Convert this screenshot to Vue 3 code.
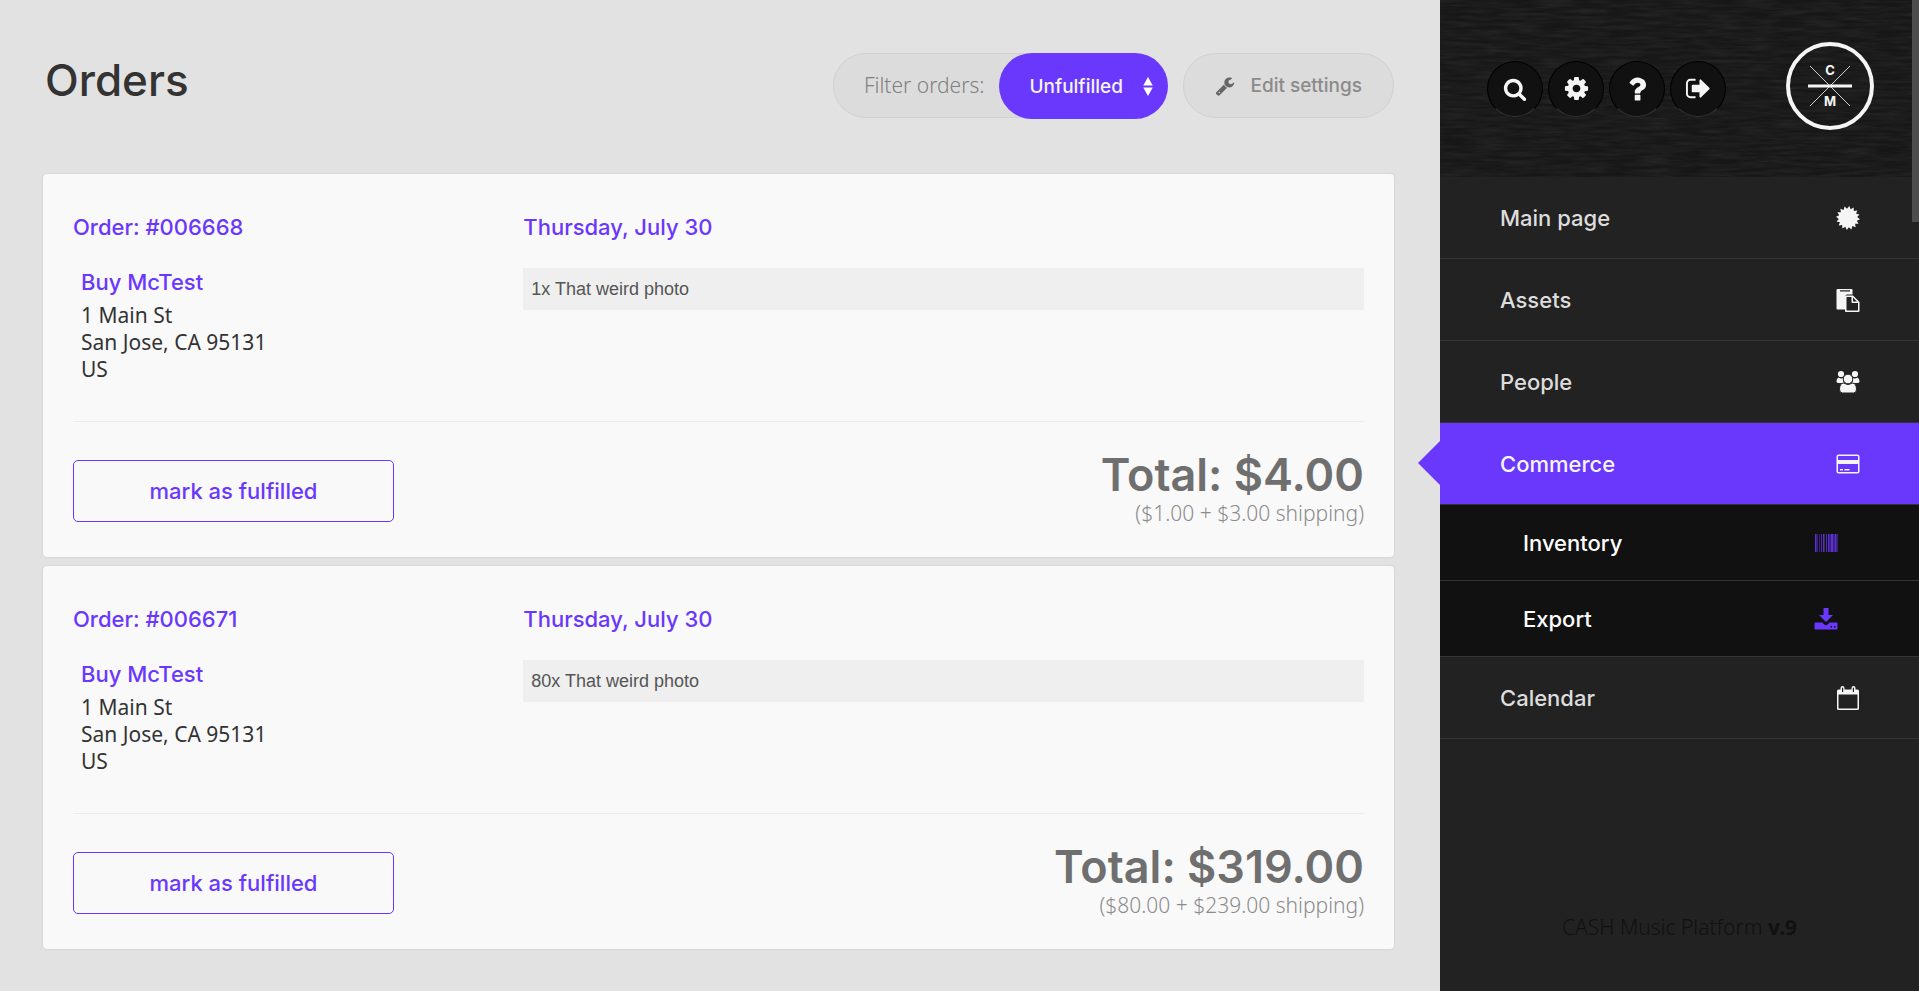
<script setup>
import { ref } from 'vue'

const filter = ref('Unfulfilled')

const orders = [
  { id: '006668', date: 'Thursday, July 30', name: 'Buy McTest', item: '1x That weird photo', total: '$4.00', detail: '($1.00 + $3.00 shipping)' },
  { id: '006671', date: 'Thursday, July 30', name: 'Buy McTest', item: '80x That weird photo', total: '$319.00', detail: '($80.00 + $239.00 shipping)' },
]

const tools = [
  { label: 'Search', size: 24, path: 'M1216 832q0-185-131.5-316.5t-316.5-131.5-316.5 131.5-131.5 316.5 131.5 316.5 316.5 131.5 316.5-131.5 131.5-316.5zm512 832q0 52-38 90t-90 38q-54 0-90-38l-343-342q-179 124-399 124-143 0-273.5-55.5t-225-150-150-225-55.5-273.5 55.5-273.5 150-225 225-150 273.5-55.5 273.5 55.5 225 150 150 225 55.5 273.5q0 220-124 399l343 343q37 37 37 90z' },
  { label: 'Settings', size: 27, path: 'M1152 896q0-106-75-181t-181-75-181 75-75 181 75 181 181 75 181-75 75-181zm512-109v222q0 12-8 23t-20 13l-185 28q-19 54-39 91 35 50 107 138 10 12 10 25t-9 23q-27 37-99 108t-94 71q-12 0-26-9l-138-108q-44 23-91 38-16 136-29 186-7 28-36 28h-222q-14 0-24.5-8.5t-11.5-21.5l-28-184q-49-16-90-37l-141 107q-10 9-25 9-14 0-25-11-126-114-165-168-7-10-7-23 0-12 8-23 15-21 51-66.5t54-70.5q-27-50-41-99l-183-27q-13-2-21-12.5t-8-23.5v-222q0-12 8-23t19-13l186-28q14-46 39-92-40-57-107-138-10-12-10-24 0-10 9-23 26-36 98.5-107.5t94.5-71.5q13 0 26 10l138 107q44-23 91-38 16-136 29-186 7-28 36-28h222q14 0 24.5 8.5t11.5 21.5l28 184q49 16 90 37l142-107q9-9 24-9 13 0 25 10 129 119 165 170 7 8 7 22 0 12-8 23-15 21-51 66.5t-54 70.5q26 50 41 98l183 28q13 2 21 12.5t8 23.5z' },
  { label: 'Help', size: 32, path: 'M1088 1256v240q0 16-12 28t-28 12h-240q-16 0-28-12t-12-28v-240q0-16 12-28t28-12h240q16 0 28 12t12 28zm316-600q0 54-15.5 101t-35 76.5-55 59.5-57.5 43.5-61 35.5q-41 23-68.5 65t-27.5 67q0 17-12 32.5t-28 15.5h-240q-15 0-25.5-18.5t-10.5-37.5v-45q0-83 65-156.5t143-108.5q59-27 84-56t25-76q0-42-46.5-74t-107.5-32q-65 0-108 29-35 25-107 115-13 16-31 16-12 0-25-8l-164-125q-13-10-15.5-25t5.5-28q160-266 464-266 80 0 161 31t146 83 106 127.5 41 158.5z' },
  { label: 'Sign out', size: 27, path: 'M704 1440q0 4 1 20t.5 26.5-3 23.5-10 19.5-20.5 6.5h-320q-119 0-203.5-84.5t-84.500-203.500v-704q0-119 84.500-203.500t203.500-84.500h320q13 0 22.500 9.500t9.500 22.500q0 4 1 20t.5 26.500-3 23.500-10 19.500-20.500 6.500h-320q-66 0-113 47t-47 113v704q0 66 47 113t113 47h312l11.500 1 11.500 3 8 5.500 7 9 2 13.500zm928-544q0 26-19 45l-544 544q-19 19-45 19t-45-19-19-45v-288h-448q-26 0-45-19t-19-45v-384q0-26 19-45t45-19h448v-288q0-26 19-45t45-19 45 19l544 544q19 19 19 45z' },
]

const menu = [
  { label: 'Main page', icon: 'badge' },
  { label: 'Assets', icon: 'paste' },
  { label: 'People', icon: 'people' },
  {
    label: 'Commerce',
    icon: 'card',
    active: true,
    children: [
      { label: 'Inventory', icon: 'barcode' },
      { label: 'Export', icon: 'download' },
    ],
  },
  { label: 'Calendar', icon: 'calendar' },
]

const burst = Array.from({ length: 32 }, (_, i) => {
  const angle = ((i + 0.5) * Math.PI) / 16
  const r = i % 2 ? 9.2 : 12
  return `${(12 + r * Math.sin(angle)).toFixed(2)},${(12 - r * Math.cos(angle)).toFixed(2)}`
}).join(' ')
</script>

<template>
  <div class="layout">
    <main class="main">
      <header class="topbar">
        <h1>Orders</h1>
        <div class="controls">
          <div class="filter">
            <label for="order-filter">Filter orders:</label>
            <div class="picker">
              <select id="order-filter" v-model="filter">
                <option>Unfulfilled</option>
                <option>Fulfilled</option>
                <option>All</option>
              </select>
              <svg class="arrows" viewBox="0 0 10 20" aria-hidden="true"><path d="M5 0l5 9H0zM5 20l5-9H0z" /></svg>
            </div>
          </div>
          <button type="button" class="edit">
            <svg viewBox="0 0 1792 1792" aria-hidden="true"><path d="M448 1472q0-26-19-45t-45-19-45 19-19 45 19 45 45 19 45-19 19-45zm644-420l-682 682q-37 37-90 37-52 0-91-37l-106-108q-38-36-38-90 0-53 38-91l681-681q39 98 114.5 173.5t173.5 114.5zm634-435q0 39-23 106-47 134-164.5 217.5t-258.5 83.5q-185 0-316.5-131.5t-131.5-316.5 131.5-316.5 316.5-131.5q58 0 121.5 16.5t107.5 46.5q16 11 16 28t-16 28l-293 169v224l193 107q5-3 79-48.5t135.5-81 70.5-35.5q15 0 23.5 10t8.5 25z" /></svg>
            Edit settings
          </button>
        </div>
      </header>

      <article v-for="o in orders" :key="o.id" class="order">
        <div class="details">
          <section>
            <h2>Order: #{{ o.id }}</h2>
            <address>
              <a href="#">{{ o.name }}</a>
              <p>1 Main St<br />San Jose, CA 95131<br />US</p>
            </address>
          </section>
          <section>
            <h2>{{ o.date }}</h2>
            <p class="item">{{ o.item }}</p>
          </section>
        </div>
        <footer class="summary">
          <button type="button" class="fulfill">mark as fulfilled</button>
          <div class="sum">
            <strong>Total: {{ o.total }}</strong>
            <span>{{ o.detail }}</span>
          </div>
        </footer>
      </article>
    </main>

    <aside class="sidebar">
      <div class="brand">
        <svg class="cloth" aria-hidden="true">
          <filter id="weave" x="0" y="0" width="100%" height="100%" color-interpolation-filters="sRGB">
            <feTurbulence type="fractalNoise" baseFrequency="0.03 0.3" numOctaves="3" seed="4" />
            <feColorMatrix values="0 0 0 0 0.18  0 0 0 0 0.18  0 0 0 0 0.18  1.6 0 0 0 -0.5" />
          </filter>
          <rect width="100%" height="100%" filter="url(#weave)" />
        </svg>
        <nav class="tools" aria-label="Tools">
          <button v-for="t in tools" :key="t.label" type="button" :aria-label="t.label">
            <svg viewBox="0 0 1792 1792" :width="t.size" :height="t.size" aria-hidden="true"><path :d="t.path" /></svg>
          </button>
        </nav>
        <a class="logo" href="#" aria-label="CASH Music">
          <svg viewBox="0 0 88 88">
            <circle cx="44" cy="44" r="42" fill="none" stroke="#f5f5f5" stroke-width="4" />
            <path d="M24 24l40 40M64 24L24 64" stroke="#ccc" stroke-width="1" />
            <path d="M22 44h44" stroke="#f5f5f5" stroke-width="3" />
            <text x="44" y="33" text-anchor="middle">C</text>
            <text x="44" y="64" text-anchor="middle">M</text>
          </svg>
        </a>
      </div>

      <nav aria-label="Main">
        <ul class="menu">
          <li v-for="m in menu" :key="m.label">
            <a href="#" :class="['entry', { active: m.active }]">
              <span>{{ m.label }}</span>
              <svg viewBox="0 0 24 24" aria-hidden="true">
                <polygon v-if="m.icon === 'badge'" :points="burst" />
                <template v-else-if="m.icon === 'paste'">
                  <path fill-rule="evenodd" d="M1.500 1h14q1 0 1 1v4.500H11q-1.500 0-1.500 1.500v13.500h-8q-1 0-1-1V2q0-1 1-1zM4 2.200v1.300h10V2.200z" />
                  <path fill-rule="evenodd" d="M10.500 7.500h6.500l6.500 6.500v9q0 1-1 1H9.800q-.800 0-.800-1V8.500q0-1 1.500-1zM10.500 9v13.500H22V15h-5.500q-1 0-1-1V9zM17 9.600v3.900h3.900z" />
                </template>
                <template v-else-if="m.icon === 'people'">
                  <circle cx="5" cy="4" r="3.100" />
                  <circle cx="19" cy="4" r="3.100" />
                  <path d="M2.500 7.500Q5 9.200 7 8q-.5 3.300 1 5H3Q.3 13 .5 11q0-2.500 2-3.500zM21.500 7.500Q19 9.200 17 8q.5 3.300-1 5h5q2.700 0 2.500-2 0-2.500-2-3.500z" />
                  <g class="front">
                    <path d="M7.500 13q4.500 3 9 0 3.800.5 4 6 .2 4-3 4h-11q-3.200 0-3-4 .2-5.500 4-6z" />
                    <circle cx="12" cy="9" r="4.800" />
                  </g>
                </template>
                <path v-else-if="m.icon === 'card'" fill-rule="evenodd" d="M2.500 2.500h19q2 0 2 2v15q0 2-2 2h-19q-2 0-2-2v-15q0-2 2-2zM2.500 4q-.5 0-.5.5V8h20V4.500q0-.5-.5-.5zM2 12v7.500q0 .5.500.5h19q.5 0 .5-.5V12zM4 17h3v1.500H4zM8.500 17h5v1.500h-5z" />
                <path v-else fill-rule="evenodd" d="M2.500 3.500h2V2q0-2 2-2t2 2v1.500h7V2q0-2 2-2t2 2v1.500h2q1.500 0 1.500 1.500v17.500q0 1.500-1.500 1.500h-19Q1 24 1 22.500V5q0-1.500 1.500-1.500zM2.500 8.500v14h19v-14zM6 1.800V6h1.200V1.800zM16.800 1.800V6H18V1.800z" />
              </svg>
            </a>
            <ul v-if="m.children" class="submenu">
              <li v-for="c in m.children" :key="c.label">
                <a href="#" class="entry">
                  <span>{{ c.label }}</span>
                  <svg viewBox="0 0 24 24" aria-hidden="true">
                    <g v-if="c.icon === 'barcode'">
                      <path opacity=".45" d="M1 3h3v18H1zM5 3h1v18H5zM9 3h2v18H9zM14 3h10v18H14z" />
                      <path opacity=".7" d="M1 3h1v18H1zM7 3h1v18H7zM9 3h1v18H9zM12 3h1v18h-1zM14 3h1v18h-1zM17 3h2v18h-2zM21 3h1v18h-1z" />
                    </g>
                    <path v-else fill-rule="evenodd" d="M9.500 1h5v7H19l-7 7-7-7h4.500zM1.500 15.500h6.800l2 2q1.700 1.400 3.400 0l2-2h6.800q1 0 1 1v5q0 1-1 1h-21q-1 0-1-1v-5q0-1 1-1zM16.500 19v1.500H18V19zM20 19v1.500h1.500V19z" />
                  </svg>
                </a>
              </li>
            </ul>
          </li>
        </ul>
      </nav>
      <p class="version">CASH Music Platform <b>v.9</b></p>
      <div class="scroll-thumb"></div>
    </aside>
  </div>
</template>

<style>
body {
  margin: 0;
}
</style>

<style scoped>
.layout {
  display: grid;
  grid-template-columns: minmax(0, 1fr) 479px;
  min-height: 100vh;
  background: #e2e2e2;
  color: #333;
  font: 300 21px/27px "Noto Sans", sans-serif;
}
h1, h2, p, ul {
  margin: 0;
  padding: 0;
}
ul {
  list-style: none;
}
a {
  color: inherit;
  text-decoration: none;
}
button, select {
  font-family: Inter, sans-serif;
  cursor: pointer;
}
.main {
  padding: 0 46px 33px 43px;
}
.topbar {
  display: flex;
  justify-content: space-between;
  align-items: flex-start;
  padding: 53px 0 55px;
}
h1 {
  margin-left: 2px;
  font: 500 44px/54px Inter, sans-serif;
}
.controls {
  display: flex;
  align-items: flex-start;
  gap: 15px;
  height: 66px;
}
.filter, .edit {
  box-sizing: border-box;
  height: 65px;
  border: 1px solid #d1d1d1;
  border-radius: 33px;
  background: #dcdcdc;
}
.filter {
  display: flex;
  align-items: flex-start;
}
.filter label {
  padding: 0 16px 0 30px;
  color: #808080;
  line-height: 62px;
}
.picker {
  position: relative;
  margin: -1px;
}
select {
  box-sizing: border-box;
  width: 169px;
  height: 66px;
  padding: 0 30px;
  border: 0;
  border-radius: 33px;
  background: #6a37fd;
  color: #f5f5f5;
  font-size: 19px;
  font-weight: 500;
  appearance: none;
}
.arrows {
  position: absolute;
  top: 24px;
  right: 15px;
  width: 10px;
  height: 19px;
  fill: #fff;
  pointer-events: none;
}
.edit {
  display: flex;
  align-items: center;
  gap: 15px;
  padding: 0 31px;
  color: #8b8b8b;
  font-size: 19px;
  font-weight: 500;
}
.edit svg {
  width: 20px;
  height: 20px;
  fill: #666;
}
.order {
  margin-bottom: 9px;
  padding: 39px 30px 0;
  border-radius: 4px;
  background: #f9f9f9;
  box-shadow: 0 0 2px rgba(0, 0, 0, 0.15);
}
.details {
  display: grid;
  grid-template-columns: 1fr 2fr;
  gap: 30px;
  padding-bottom: 38px;
  border-bottom: 1px solid #ececec;
}
h2 {
  margin-bottom: 27px;
  color: #6a37fd;
  font: 500 22px/28px Inter, sans-serif;
}
address {
  padding-left: 8px;
  font-style: normal;
  font-weight: 400;
}
address a {
  display: block;
  margin-bottom: 6px;
  color: #6a37fd;
  font: 500 22px/28px Inter, sans-serif;
}
.item {
  padding: 0 8px;
  background: #efefef;
  color: #555;
  font: 18px/42px "Liberation Sans", Arial, sans-serif;
}
.summary {
  display: flex;
  justify-content: space-between;
  align-items: flex-start;
  padding: 28px 0 31px;
}
.fulfill {
  width: 321px;
  height: 62px;
  margin-top: 10px;
  border: 1px solid #6a37fd;
  border-radius: 5px;
  background: transparent;
  color: #6a37fd;
  font-size: 22px;
  font-weight: 500;
}
.sum {
  text-align: right;
  color: #8c8c8c;
}
.sum strong {
  display: block;
  color: #6f6f6f;
  font: 600 45px/50px Inter, sans-serif;
}
.sum span {
  display: block;
  line-height: 26px;
}
.sidebar {
  position: relative;
  display: flex;
  flex-direction: column;
  background: #222;
}
.brand {
  position: relative;
  display: flex;
  justify-content: space-between;
  align-items: center;
  box-sizing: border-box;
  height: 177px;
  padding: 0 45px 5px 47px;
  background: #171717;
}
.cloth {
  position: absolute;
  inset: 0;
  width: 100%;
  height: 100%;
  opacity: 0.7;
}
.tools {
  position: relative;
  display: flex;
  gap: 5px;
  margin-top: 5px;
}
.tools button {
  display: flex;
  align-items: center;
  justify-content: center;
  width: 56px;
  height: 56px;
  padding: 0;
  border: 1px solid #000;
  border-bottom-color: #333;
  border-radius: 50%;
  background: #111;
}
.tools svg {
  fill: #f5f5f5;
}
.logo {
  position: relative;
  width: 88px;
  height: 88px;
}
.logo text {
  fill: #f5f5f5;
  font: 700 13px Inter, sans-serif;
}
.entry {
  position: relative;
  display: flex;
  align-items: center;
  justify-content: space-between;
  height: 81px;
  padding: 0 59px 0 60px;
  border-bottom: 1px solid #353535;
  color: #ddd;
  font: 500 22px/28px Inter, sans-serif;
}
.entry svg {
  width: 24px;
  height: 24px;
  fill: #f5f5f5;
}
.front {
  stroke: #222;
  stroke-width: 1;
}
.active {
  background: #6a37fd;
  color: #f5f5f5;
}
.active::before {
  content: "";
  position: absolute;
  top: 18px;
  right: 100%;
  border: 22px solid transparent;
  border-left-width: 0;
  border-right-color: #6a37fd;
}
.submenu .entry {
  height: 75px;
  padding: 0 81px 0 83px;
  background: #111;
  color: #fff;
}
.submenu svg {
  fill: #6a37fd;
}
.version {
  margin: auto 0 50px;
  text-align: center;
  color: #111;
}
.version b {
  font-weight: 700;
}
.scroll-thumb {
  position: absolute;
  top: 0;
  right: 0;
  width: 7px;
  height: 222px;
  background: #4d4d4d;
}
</style>
